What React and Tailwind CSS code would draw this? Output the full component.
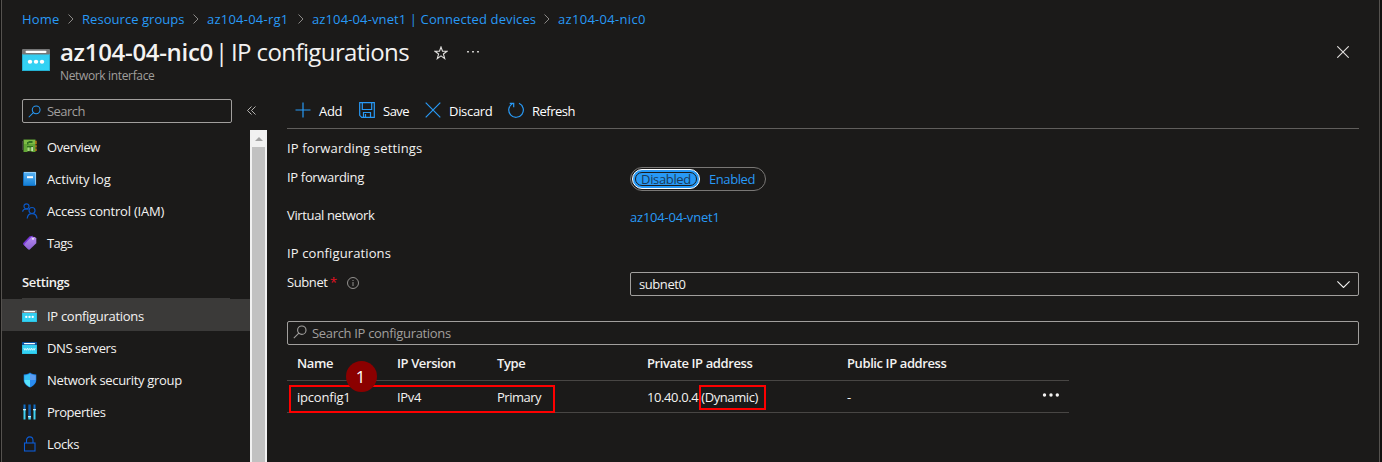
import React from "react";

const stroke = { fill: "none", strokeLinecap: "butt" };

function Window({ className, dark, dots }) {
  return (
    <svg viewBox="0 0 28 24" className={className} preserveAspectRatio="none">
      <defs>
        <linearGradient id="win" x1="0" y1="0" x2="0" y2="1">
          <stop offset="0" stopColor="#35cdf0" />
          <stop offset="1" stopColor="#32d4f5" />
        </linearGradient>
      </defs>
      <rect x="0" y="0" width="28" height="24" rx="1" fill={dark ? "#0a4f9c" : "#767676"} />
      <path d="M0 6h28v17a1 1 0 0 1-1 1H1a1 1 0 0 1-1-1z" fill="url(#win)" />
      <path d="M.5 6v17.500h27V6" fill="none" stroke="#1fa5c6" strokeWidth=".8" />
      <rect x="3.500" y="1.900" width="21" height="2.500" rx="1.200" fill="#fff" />
      {dots ? (
        <g fill="#fff">
          <circle cx="8" cy="13.800" r="2.200" />
          <circle cx="14" cy="13.800" r="2.200" />
          <circle cx="20" cy="13.800" r="2.200" />
        </g>
      ) : (
        <path
          d="M3.500 12l1.800 4.500L7 13l1.700 3.500L10.500 12l1.800 4.500L14 13l1.700 3.500L17.500 12l1.800 4.500L21 13l1.700 3.500L24.500 12"
          fill="none"
          stroke="#e3fafe"
          strokeWidth="1.600"
        />
      )}
    </svg>
  );
}

function Magnifier({ className }) {
  return (
    <svg viewBox="0 0 14 14" className={className} fill="none" stroke="currentColor" strokeWidth="1.1">
      <circle cx="8.8" cy="5.2" r="4.2" />
      <path d="M5.800 8.200L.8 13.200" />
    </svg>
  );
}

const icons = {
  overview: (
    <svg viewBox="0 0 16 16" className="mb-[2px] h-4 w-4">
      <path d="M.5 3v9" stroke="#3d3d3d" />
      <path d="M1.500 1.500h12V14H10l-1-.8H6L5 14H1.500z" fill="#62a636" />
      <path d="M2 2h11v4H2z" fill="#7dbb45" />
      <path d="M13 2.800h1.800v3.500H13zM13 7.300h1.800v2.200H13zM13 10.500h1.800V13H13z" fill="#a87a18" />
      <path d="M5 4h1.500v2.500H5zM6.500 3h4v2h-4zM5 8h6v1.500H5z" fill="#2f6f22" />
      <path d="M5.500 9.500h2V13h-2z" fill="#a9d67f" />
      <path d="M9.500 9h1.200v4H9.500z" fill="#f0f7ea" />
    </svg>
  ),
  log: (
    <svg viewBox="0 0 16 16" className="h-4 w-4">
      <defs>
        <linearGradient id="log" x1="0" y1="0" x2="0" y2="1">
          <stop offset="0" stopColor="#5ab4f5" />
          <stop offset="1" stopColor="#1580d6" />
        </linearGradient>
      </defs>
      <rect x="1" y="1" width="13" height="14" rx="1" fill="#0f6cbd" />
      <rect x="2" y="1" width="12" height="13" rx=".6" fill="url(#log)" />
      <path d="M2 1.400h11.600v12.300" fill="none" stroke="#b9e0fc" strokeWidth=".7" />
      <rect x="5" y="5.200" width="6" height="2" fill="#fff" />
    </svg>
  ),
  iam: (
    <svg viewBox="0 0 16 16" className="h-4 w-4" {...stroke} stroke="#0b57c4" strokeWidth="1.2">
      <circle cx="4.500" cy="3.300" r="2.500" />
      <path d="M.6 8.800C.8 7 2.500 5.800 4.500 5.800c.8 0 1.400.2 2 .5" />
      <circle cx="10" cy="7.500" r="3" />
      <path d="M5.200 15.500c.3-2.900 2.300-4.900 4.800-4.900s4.700 2 5 4.900" />
    </svg>
  ),
  tags: (
    <svg viewBox="0 0 16 16" className="h-4 w-4">
      <defs>
        <linearGradient id="tag" x1="0" y1="0" x2="0" y2="1">
          <stop offset="0" stopColor="#b58af0" />
          <stop offset="1" stopColor="#8a5fd0" />
        </linearGradient>
      </defs>
      <path d="M1 8.300L7.700 1.300 11 .8 5.500 13.500 1 9.300z" fill="#7434d4" />
      <path d="M2.500 9L9.500 1.800l3.500.1 1.300 1.500v4.800L7.500 14.800 6.200 14.600 2.500 10.500z" fill="url(#tag)" />
      <circle cx="11" cy="3.800" r=".9" fill="#fff" />
    </svg>
  ),
  ip: <Window className="h-3 w-[15px]" dots />,
  dns: <Window className="h-3 w-[15px]" dark />,
  nsg: (
    <svg viewBox="0 0 16 16" className="h-4 w-4">
      <path d="M8 .5C10 2 12 2.300 14.300 2.400V8c0 3.500-3 6-6.300 7.500C4.700 14 1.700 11.500 1.700 8V2.400C4 2.300 6 2 8 .5z" fill="#1a7fe0" />
      <path d="M8 1.500c1.700 1.300 3.500 1.700 5.700 1.800V8H8z" fill="#5c9df2" />
      <path d="M8 8H2.300c0 3.300 2.700 5.500 5.700 7z" fill="#58e4fc" />
      <path d="M8 1.500C6.300 2.800 4.500 3.200 2.300 3.300V8H8z" fill="#37c0f7" />
      <path d="M8 8h5.700c0 3.300-2.700 5.500-5.700 7z" fill="#2b8cf0" />
    </svg>
  ),
  props: (
    <svg viewBox="0 0 16 16" className="h-4 w-4">
      <path d="M1.500 .5h2V5h-2zM11.500 .5h2V5h-2z" fill="#0f6fc9" />
      <path d="M6.300 .5h2.500v12H6.300z" fill="#0f5fae" />
      <path d="M1.500 6h2v9.500h-2zM11.500 6h2v9.500h-2zM6.300 13h2.500v2.500H6.300z" fill="#3fd0f2" />
      <path d="M1 5h3v1.200H1zM11 5h3v1.200h-3zM6 12h3v1.200H6z" fill="#c9eefa" />
    </svg>
  ),
  lock: (
    <svg viewBox="0 0 16 16" className="h-4 w-4" {...stroke} stroke="#0b5cd6" strokeWidth="1.100">
      <rect x="2.500" y="7" width="10.500" height="8" />
      <path d="M4.500 7V4.600C4.500 2.300 5.800.9 7.700.9S11 2.300 11 4.600V7" />
    </svg>
  ),
};

const nav = [
  ["overview", "Overview", "tracking-[-0.42px]"],
  ["log", "Activity log", "tracking-[-0.1px]"],
  ["iam", "Access control (IAM)", "tracking-[-0.22px]"],
  ["tags", "Tags", "tracking-[-0.6px]"],
];
const settings = [
  ["ip", "IP configurations", "tracking-[-0.3px]"],
  ["dns", "DNS servers", "tracking-[-0.42px]"],
  ["nsg", "Network security group", "tracking-[-0.33px]"],
  ["props", "Properties", "tracking-[-0.45px]"],
  ["lock", "Locks", "tracking-[-0.35px]"],
];

function NavItem({ item }) {
  return (
    <div className="flex h-8 items-center pl-5">
      <span className="flex w-[25px] items-center">{icons[item[0]]}</span>
      <span className={item[2]}>{item[1]}</span>
    </div>
  );
}

const crumbs = [
  ["Home", "w-[38px]", "tracking-[0.2px]"],
  ["Resource groups", "w-[103px]", "tracking-[0.05px]"],
  ["az104-04-rg1", "w-[83px]", "tracking-[0.23px]"],
  ["az104-04-vnet1 | Connected devices", "w-[224px]", "tracking-[0.12px]"],
  ["az104-04-nic0", "w-[90px]", "tracking-[0.3px]"],
];

const tools = [
  ["Add", "w-[64px]", "tracking-[-0.3px]", <path d="M8 .5v15M.5 8h15" />],
  [
    "Save",
    "w-[66px]",
    "tracking-[-0.5px]",
    <g>
      <path d="M.7.7h14.600v14.600H2.700L.7 13.300z" />
      <path d="M3.300.7v6.800h9.400V.7M4.500 15.300v-4.800h7v4.800M6.500 12v3" />
    </g>,
  ],
  ["Discard", "w-[83px]", "tracking-[-0.3px]", <path d="M.7.7l14.600 14.600M15.300.7L.7 15.300" />],
  [
    "Refresh",
    "w-[80px]",
    "tracking-[-0.5px]",
    <g>
      <path d="M11 1.300A7.300 7.300 0 1 1 4.500 1.600" />
      <path d="M1.700 1.300h4v4" />
    </g>,
  ],
];

export default function App() {
  return (
    <div className="flex h-[462px] w-[1382px] overflow-hidden whitespace-nowrap bg-[#11100f] pl-px pr-[2px] font-['Open_Sans',sans-serif] text-[13px] leading-4 text-[#f3f2f1]">
      <div className="flex flex-1 flex-col border-x border-[#55524f] bg-[#1b1a19]">
        <nav className="flex h-[37px] items-center pl-5 text-[#2899f5]">
          {crumbs.map((c, i) => (
            <React.Fragment key={c[0]}>
              {i > 0 && (
                <span className="flex w-[22px] justify-center text-[#8a8886]">
                  <svg viewBox="0 0 6 10" className="h-[10px] w-[6px]" fill="none" stroke="currentColor">
                    <path d="M.5.5L5 5 .5 9.500" />
                  </svg>
                </span>
              )}
              <span className={c[1] + " " + c[2]}>{c[0]}</span>
            </React.Fragment>
          ))}
        </nav>

        <header className="flex h-[62px] pl-5 pr-[30px]">
          <Window className="mt-3 h-[22px] w-7" dots />
          <div className="ml-[10px] w-[352px]">
            <h1 className="flex h-[31px] text-[24px] leading-[30px]">
              <span className="w-[155px] font-semibold tracking-[-0.32px]">az104-04-nic0</span>
              <span className="w-4 pr-[3px] text-center">|</span>
              <span className="tracking-[-0.6px]">IP configurations</span>
            </h1>
            <p className="text-[12px] leading-4 tracking-[-0.35px] text-[#a19f9d]">Network interface</p>
          </div>
          <svg viewBox="0 0 14 14" className="ml-[22px] mt-[9px] h-[14px] w-[14px]" fill="none" stroke="#e1dfdd" strokeWidth="1.1">
            <path d="M7 1l1.500 4.300H13L9.400 8l1.300 4.600L7 9.900l-3.700 2.700L4.600 8 1 5.300h4.500z" />
          </svg>
          <svg viewBox="0 0 12 2" className="ml-[19px] mt-[14px] h-[2px] w-3" fill="#c8c6c4">
            <path d="M0 0h2v1.500H0zM5 0h2v1.500H5zM10 0h2v1.500h-2z" />
          </svg>
          <svg viewBox="0 0 12 12" className="ml-auto mt-[9px] h-3 w-3" fill="none" stroke="#e1dfdd" strokeWidth="1.1">
            <path d="M.3.300l11.400 11.400M11.700.3L.3 11.700" />
          </svg>
        </header>

        <div className="flex flex-1">
          <aside className="flex w-[265px] flex-col">
            <div className="flex h-[31px] items-start pl-5">
              <div className="flex h-6 w-[210px] items-center rounded-[2px] border border-[#a19f9d] pl-[5px] text-[#a19f9d]">
                <Magnifier className="h-[13px] w-[13px] text-[#2899f5]" />
                <span className="ml-[6px] tracking-[-0.55px]">Search</span>
              </div>
              <svg viewBox="0 0 9 9" className="ml-[15px] mt-[7px] h-[9px] w-[9px]" fill="none" stroke="#c8c6c4" strokeWidth=".9">
                <path d="M4.500.5l-4 4 4 4M8.500.5l-4 4 4 4" />
              </svg>
            </div>
            <div className="flex flex-1">
              <div className="w-[248px] pt-px">
                {nav.map((n) => (
                  <NavItem key={n[0]} item={n} />
                ))}
                <div className="ml-5 mr-5 flex h-10 items-center border-b border-[#3b3a39] pt-[7px] font-semibold tracking-[-0.35px]">Settings</div>
                {settings.map((n, i) => (
                  <div key={n[0]} className={i === 0 ? "h-8 bg-[#3b3a39] pt-px" : "h-8 pt-px"}>
                    <NavItem item={n} />
                  </div>
                ))}
              </div>
              <div className="flex w-[17px] flex-col items-center bg-[#f1f1f1]">
                <svg viewBox="0 0 8 4" className="mt-[7px] mb-[6px] h-[4px] w-2 shrink-0" fill="#a3a3a3">
                  <path d="M4 0l4 4H0z" />
                </svg>
                <div className="w-[13px] flex-1 bg-[#c1c1c1]" />
              </div>
            </div>
          </aside>

          <main className="ml-5 w-[1072px]">
            <div className="flex h-[30px] border-b border-[#605e5c] pl-2">
              {tools.map((t) => (
                <div key={t[0]} className={"flex h-6 items-center " + t[1]}>
                  <svg viewBox="0 0 16 16" className="mb-[2px] h-4 w-4" fill="none" stroke="#2899f5" strokeWidth="1.200">
                    {t[3]}
                  </svg>
                  <span className={"ml-2 text-white " + t[2]}>{t[0]}</span>
                </div>
              ))}
            </div>
            <h2 className="mt-[11px] h-[27px] tracking-[0.16px]">IP forwarding settings</h2>
            <div className="flex h-[38px]">
              <span className="mt-[2px] w-[343px] tracking-[-0.33px]">IP forwarding</span>
              <div className="flex h-6 w-[136px] items-center rounded-full border border-[#797775] pl-px text-[#2899f5]">
                <div className="flex h-5 w-[68px] rounded-full border border-white bg-[#2899f5] p-[2px]">
                  <div className="flex flex-1 items-center justify-center rounded-full border border-[#1b1a19] tracking-[-0.35px] text-[#1b3a57]">Disabled</div>
                </div>
                <span className="ml-[9px] tracking-[-0.42px]">Enabled</span>
              </div>
            </div>
            <div className="flex h-[40px]">
              <span className="mt-[2px] w-[343px] tracking-[-0.36px]">Virtual network</span>
              <span className="mt-[4px] tracking-[-0.22px] text-[#2899f5]">az104-04-vnet1</span>
            </div>
            <h2 className="h-[27px] tracking-[0.12px]">IP configurations</h2>
            <div className="flex h-[49px]">
              <div className="flex w-[343px] pt-[2px]">
                <span className="w-10 tracking-[-0.4px]">Subnet</span>
                <span className="ml-[3px] w-[7px] text-[#e81123]">*</span>
                <svg viewBox="0 0 12 12" className="ml-[10px] mt-[3px] h-3 w-3" fill="none" stroke="#a19f9d" strokeWidth=".9">
                  <circle cx="6" cy="6" r="5.500" />
                  <path d="M6 5v4M6 3v1" />
                </svg>
              </div>
              <div className="flex h-6 flex-1 items-center justify-between rounded-[2px] border border-[#a19f9d] pl-2 pr-2">
                <span className="tracking-[-0.42px]">subnet0</span>
                <svg viewBox="0 0 13 7" className="h-[7px] w-[13px]" fill="none" stroke="#f3f2f1" strokeWidth="1.1">
                  <path d="M.4.4l6.100 6.100L12.600.4" />
                </svg>
              </div>
            </div>
            <div className="flex h-6 items-center rounded-[2px] border border-[#a19f9d] pl-[5px] text-[#a19f9d]">
              <Magnifier className="mb-[2px] h-[14px] w-[14px]" />
              <span className="ml-[5px] tracking-[-0.32px]">Search IP configurations</span>
            </div>
            <div className="relative w-[782px]">
              <div className="grid h-9 grid-cols-[100px_100px_150px_200px_1fr] items-center border-b border-[#484644] pl-[10px] font-semibold tracking-[-0.4px]">
                <span>Name</span>
                <span>IP Version</span>
                <span>Type</span>
                <span>Private IP address</span>
                <span>Public IP address</span>
              </div>
              <div className="grid h-8 grid-cols-[100px_100px_150px_200px_1fr_27px] items-center border-b border-[#484644] pl-[10px] tracking-[-0.35px]">
                <span className="tracking-[-0.2px]">ipconfig1</span>
                <span>IPv4</span>
                <span className="tracking-[-0.5px]">Primary</span>
                <span className="tracking-[-0.4px]">10.40.0.4 (Dynamic)</span>
                <span>-</span>
                <svg viewBox="0 0 17 4" className="mb-[3px] h-1 w-[17px]" fill="#f3f2f1">
                  <circle cx="2.500" cy="2" r="1.700" />
                  <circle cx="9" cy="2" r="1.700" />
                  <circle cx="15.300" cy="2" r="1.700" />
                </svg>
              </div>
              <div className="absolute left-[2px] top-[40px] h-7 w-[266px] border-2 border-[#fe0000]" />
              <div className="absolute left-[412px] top-[40px] h-[25px] w-[67px] border-2 border-[#fe0000]" />
              <div className="absolute left-[59px] top-[16px] flex h-[31px] w-[31px] items-center justify-center rounded-full bg-[#8b0000] pr-[2px] text-[17px] text-white">1</div>
            </div>
          </main>
        </div>
      </div>
    </div>
  );
}
